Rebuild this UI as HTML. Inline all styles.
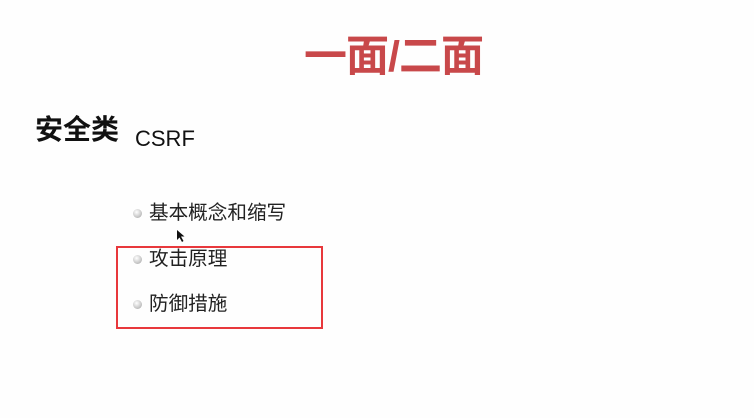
<!DOCTYPE html>
<html><head><meta charset="utf-8"><style>
body{margin:0;width:754px;height:418px;background:#fefefe;position:relative;overflow:hidden;font-family:"Liberation Sans","Noto Sans CJK SC",sans-serif;}
.a{position:absolute;white-space:nowrap;line-height:1;}
.t{left:304px;top:36px;font-size:43px;font-weight:bold;color:#c8484a;letter-spacing:-1px}
.s{left:35px;top:116px;font-size:28px;font-weight:bold;color:#111}
.c{left:135px;top:128px;font-size:22px;color:#111}
.i{left:149px;font-size:19.6px;color:#222}
.b{position:absolute;left:133px;width:9px;height:9px;border-radius:50%;background:radial-gradient(circle at 40% 35%,#fff,#c8c8c8 60%,#999)}
.box{position:absolute;left:116px;top:246px;width:203px;height:79px;border:2px solid #e8383c}
</style></head><body>
<div class="a t">一面/二面</div>
<div class="a s">安全类</div>
<div class="a c">CSRF</div>
<div class="b" style="top:209px"></div><div class="a i" style="top:204px">基本概念和缩写</div>
<div class="b" style="top:255px"></div><div class="a i" style="top:250px">攻击原理</div>
<div class="b" style="top:300px"></div><div class="a i" style="top:295px">防御措施</div>
<div class="box"></div>
<svg style="position:absolute;left:176px;top:229px" width="10" height="14"><path d="M1 1 L1 11 L3.5 8.5 L6 13 L7.5 12 L5 7.5 L8.5 7.5 Z" fill="#111"/></svg>
</body></html>
